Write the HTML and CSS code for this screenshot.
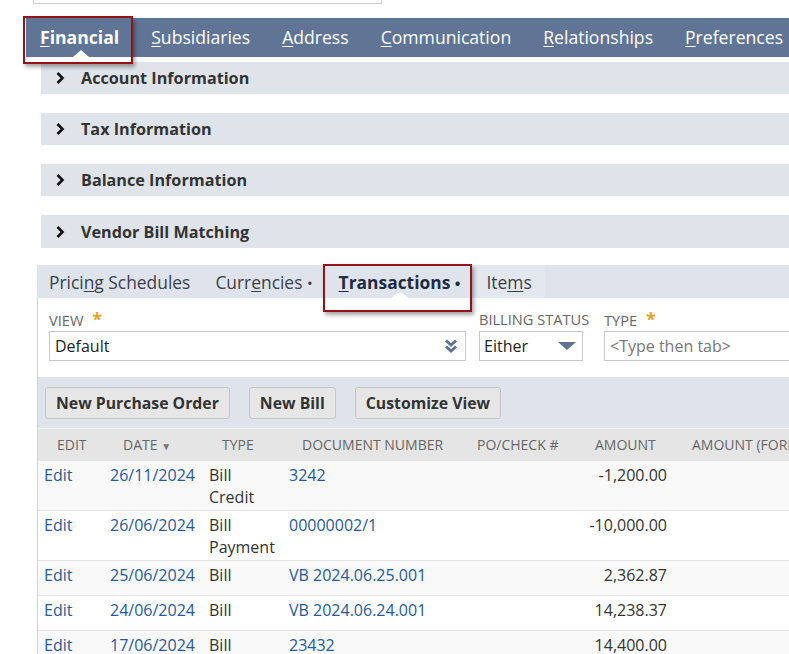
FILE: index.html
```html
<!DOCTYPE html>
<html>
<head>
<meta charset="utf-8">
<link rel="stylesheet" href="styles.css">
</head>
<body>
<div class="page">
  <div class="topfield"></div>

  <div class="tabbar">
    <div class="tab active"><u>F</u>inancial<span class="caret"></span></div>
    <div class="tab"><u>S</u>ubsidiaries</div>
    <div class="tab"><u>A</u>ddress</div>
    <div class="tab"><u>C</u>ommunication</div>
    <div class="tab"><u>R</u>elationships</div>
    <div class="tab"><u>P</u>references</div>
  </div>

  <div class="sections">
    <div class="section"><svg class="chev" width="10" height="14" viewBox="0 0 10 14"><path d="M2.5 2 L7.5 7 L2.5 12" fill="none" stroke="#111" stroke-width="2.6"/></svg>Account Information</div>
    <div class="section"><svg class="chev" width="10" height="14" viewBox="0 0 10 14"><path d="M2.5 2 L7.5 7 L2.5 12" fill="none" stroke="#111" stroke-width="2.6"/></svg>Tax Information</div>
    <div class="section"><svg class="chev" width="10" height="14" viewBox="0 0 10 14"><path d="M2.5 2 L7.5 7 L2.5 12" fill="none" stroke="#111" stroke-width="2.6"/></svg>Balance Information</div>
    <div class="section"><svg class="chev" width="10" height="14" viewBox="0 0 10 14"><path d="M2.5 2 L7.5 7 L2.5 12" fill="none" stroke="#111" stroke-width="2.6"/></svg>Vendor Bill Matching</div>
  </div>

  <div class="subtabs">
    <div class="subtab">Prici<u>n</u>g Schedules</div>
    <div class="subtab">Curr<u>e</u>ncies <span class="dot">•</span></div>
    <div class="subtab active"><u>T</u>ransactions <span class="dot">•</span><span class="caret"></span></div>
    <div class="subtab items">Ite<u>m</u>s</div>
  </div>

  <div class="panel">
    <div class="filters">
      <div class="field f-view">
        <div class="label">VIEW <span class="req">*</span></div>
        <div class="select">
          <span>Default</span>
          <svg width="14" height="16" viewBox="0 0 14 16"><path d="M2 2.5 L7 7 L12 2.5 M2 8.5 L7 13 L12 8.5" fill="none" stroke="#5f7395" stroke-width="3"/></svg>
        </div>
      </div>
      <div class="field f-billing">
        <div class="label">BILLING STATUS</div>
        <div class="select">
          <span>Either</span>
          <svg width="18" height="9" viewBox="0 0 18 9"><path d="M0 0 H18 L9 8 Z" fill="#5f7395"/></svg>
        </div>
      </div>
      <div class="field f-type">
        <div class="label">TYPE <span class="req">*</span></div>
        <div class="select input"><span class="ph">&lt;Type then tab&gt;</span></div>
      </div>
    </div>

    <div class="buttonbar">
      <button class="btn">New Purchase Order</button>
      <button class="btn">New Bill</button>
      <button class="btn">Customize View</button>
    </div>

    <table class="grid">
      <colgroup>
        <col class="c1"><col class="c2"><col class="c3"><col class="c4"><col class="c5"><col class="c6"><col class="c7">
      </colgroup>
      <thead>
        <tr>
          <th>EDIT</th>
          <th>DATE <span class="sort">▼</span></th>
          <th>TYPE</th>
          <th>DOCUMENT NUMBER</th>
          <th>PO/CHECK #</th>
          <th>AMOUNT</th>
          <th>AMOUNT (FOREIGN CURRENCY)</th>
        </tr>
      </thead>
      <tbody>
        <tr class="odd"><td><a>Edit</a></td><td><a>26/11/2024</a></td><td>Bill<br>Credit</td><td><a>3242</a></td><td></td><td class="num">-1,200.00</td><td></td></tr>
        <tr><td><a>Edit</a></td><td><a>26/06/2024</a></td><td>Bill<br>Payment</td><td><a>00000002/1</a></td><td></td><td class="num">-10,000.00</td><td></td></tr>
        <tr class="odd"><td><a>Edit</a></td><td><a>25/06/2024</a></td><td>Bill</td><td><a>VB 2024.06.25.001</a></td><td></td><td class="num">2,362.87</td><td></td></tr>
        <tr><td><a>Edit</a></td><td><a>24/06/2024</a></td><td>Bill</td><td><a>VB 2024.06.24.001</a></td><td></td><td class="num">14,238.37</td><td></td></tr>
        <tr class="odd"><td><a>Edit</a></td><td><a>17/06/2024</a></td><td>Bill</td><td><a>23432</a></td><td></td><td class="num">14,400.00</td><td></td></tr>
      </tbody>
    </table>
  </div>
</div>

<div class="annot annot-1"></div>
<div class="annot annot-2"></div>
</body>
</html>
```

FILE: styles.css
```css
html, body {
  margin: 0;
  padding: 0;
  background: #fff;
  overflow: hidden;
}
body {
  font-family: "Open Sans", "Noto Sans", sans-serif;
  color: #333;
  width: 789px;
  height: 654px;
  position: relative;
}
.page {
  padding-left: 26px;
}
u { text-decoration: underline; text-underline-offset: 2px; text-decoration-thickness: 1px; }

.topfield {
  margin-left: 7px;
  width: 347px;
  height: 20px;
  margin-top: -18px;
  border: 1px solid #cfcfcf;
  margin-bottom: 14px;
}

/* main tabs */
.tabbar {
  display: flex;
  height: 39px;
  background: #607596;
  white-space: nowrap;
}
.tab {
  position: relative;
  padding: 0 16px;
  font-size: 17.6px;
  line-height: 38px;
  color: #fff;
}
.tab:first-child { padding-left: 14px; }
.tab.active { font-weight: 700; }
.tab .caret {
  position: absolute;
  left: 50%;
  bottom: 0;
  margin-left: -8px;
  width: 0; height: 0;
  border-left: 8px solid transparent;
  border-right: 8px solid transparent;
  border-bottom: 7px solid #fff;
}

/* collapsible sections */
.sections {
  margin-left: 15px;
  margin-top: 5px;
}
.section {
  display: flex;
  align-items: center;
  height: 32px;
  background: #dfe3ea;
  margin-bottom: 19px;
  font-size: 16.2px;
  font-weight: 700;
  color: #333;
  padding-left: 14px;
}
.section:last-child { margin-bottom: 0; height: 33px; }
.section .chev { margin-right: 16px; }

/* sub tabs */
.subtabs {
  margin-left: 11px;
  margin-top: 17px;
  height: 33px;
  background: #dfe4ec;
  display: flex;
  white-space: nowrap;
}
.subtab {
  position: relative;
  box-sizing: border-box;
  height: 33px;
  padding: 1px 13px 0 12px;
  font-size: 17.4px;
  line-height: 33px;
  color: #3a3f4a;
}
.subtab .dot { font-size: 15px; }
.subtab.active {
  font-weight: 700;
  color: #1f2b45;
  padding-left: 13px;
}
.subtab.items {
  background: #e3e7ee;
  padding-left: 13px;
  padding-right: 13px;
}
.subtab .caret {
  position: absolute;
  left: 50%;
  bottom: 0;
  margin-left: -9px;
  width: 0; height: 0;
  border-left: 9px solid transparent;
  border-right: 9px solid transparent;
  border-bottom: 6px solid #fff;
}

/* panel */
.panel {
  margin-left: 11px;
  border-left: 1px solid #d2d2d2;
}
.filters {
  display: flex;
  padding: 10px 0 16px 11px;
  white-space: nowrap;
}
.field { display: flex; flex-direction: column; }
.label {
  font-size: 14.6px;
  line-height: 23px;
  color: #666;
  height: 23px;
}
.req {
  color: #e5a224;
  font-size: 18px;
  font-weight: 700;
  margin-left: 5px;
}
.select {
  box-sizing: border-box;
  height: 30px;
  border: 1px solid #c8c8c8;
  display: flex;
  align-items: center;
  justify-content: space-between;
  padding: 0 7px 0 5px;
  font-size: 16px;
  color: #222;
  background: #fff;
}
.f-view .select { width: 417px; }
.f-billing { margin-left: 13px; width: 104px; }
.f-billing .select { width: 104px; padding-right: 6px; padding-left: 4px; }
.f-type { margin-left: 21px; }
.f-type .select { width: 220px; }
.ph { color: #777; }

/* buttons */
.buttonbar {
  background: #dfe4ec;
  padding: 10px 7px 9px;
  display: flex;
  gap: 19px;
}
.btn {
  height: 32px;
  box-sizing: border-box;
  padding: 0 10px;
  font-family: "Open Sans", "Noto Sans", sans-serif;
  font-size: 15.8px;
  font-weight: 700;
  color: #333;
  background: #e6e6e6;
  border: 1px solid #c6c6c6;
  border-radius: 3px;
}

/* table */
.grid {
  border-collapse: collapse;
  table-layout: fixed;
  width: 900px;
  white-space: nowrap;
}
.c1 { width: 66px; }
.c2 { width: 99px; }
.c3 { width: 80px; }
.c4 { width: 175px; }
.c5 { width: 118px; }
.c6 { width: 97px; }
.c7 { width: 265px; }
.grid th {
  background: #e5e5e5;
  border-top: 1px solid #f2f2f2;
  height: 30px;
  padding: 0 0 2px 19px;
  text-align: left;
  font-size: 14px;
  font-weight: 400;
  color: #666;
}
.sort { font-size: 10px; color: #777; }
.grid td {
  height: 29px;
  padding: 3px 6px 2px;
  vertical-align: top;
  font-size: 16px;
  line-height: 22px;
  border-bottom: 1px solid #e3e3e3;
  color: #333;
  white-space: normal;
}
.grid td:nth-child(4) { white-space: nowrap; }
.grid tr.odd td { background: #f9f9f9; }
.grid a { color: #255a9b; text-decoration: none; }
.grid td.num { text-align: right; padding-right: 6px; }

/* annotation boxes */
.annot {
  position: absolute;
  box-sizing: border-box;
  border: 2px solid #931319;
  box-shadow: 2px 3px 4px rgba(0, 0, 0, 0.35);
}
.annot-1 { left: 23px; top: 16px; width: 110px; height: 48px; }
.annot-2 { left: 323px; top: 264px; width: 149px; height: 48px; }
```
